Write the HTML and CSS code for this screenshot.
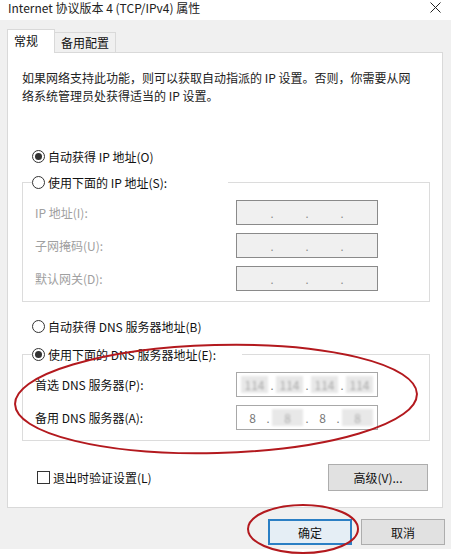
FILE: index.html
```html
<!DOCTYPE html>
<html lang="zh-CN">
<head>
  <meta charset="UTF-8">
  <title>Internet 协议版本 4 (TCP/IPv4) 属性</title>
  <link rel="stylesheet" href="styles.css">
</head>
<body>
  <div class="titlebar">
    <span class="title">Internet 协议版本 4 (TCP/IPv4) 属性</span>
    <svg class="close" width="11" height="11" viewBox="0 0 11 11"><path d="M0.5 0.5 L10.5 10.5 M10.5 0.5 L0.5 10.5" stroke="#222" stroke-width="1"/></svg>
  </div>

  <div class="dialog">
    <div class="tabs">
      <div class="tab active">常规</div>
      <div class="tab">备用配置</div>
    </div>

    <div class="panel">
      <p class="desc">如果网络支持此功能，则可以获取自动指派的 IP 设置。否则，你需要从网<br>络系统管理员处获得适当的 IP 设置。</p>

      <div class="option first"><span class="radio checked"></span>自动获得 IP 地址(O)</div>

      <fieldset class="group">
        <legend class="option"><span class="radio"></span>使用下面的 IP 地址(S):</legend>
        <div class="row disabled">
          <span class="label">IP 地址(I):</span>
          <div class="ipbox"><span></span><i>.</i><span></span><i>.</i><span></span><i>.</i><span></span></div>
        </div>
        <div class="row disabled">
          <span class="label">子网掩码(U):</span>
          <div class="ipbox"><span></span><i>.</i><span></span><i>.</i><span></span><i>.</i><span></span></div>
        </div>
        <div class="row disabled">
          <span class="label">默认网关(D):</span>
          <div class="ipbox"><span></span><i>.</i><span></span><i>.</i><span></span><i>.</i><span></span></div>
        </div>
      </fieldset>

      <div class="option dns-auto"><span class="radio"></span>自动获得 DNS 服务器地址(B)</div>

      <fieldset class="group dns">
        <legend class="option"><span class="radio checked"></span>使用下面的 DNS 服务器地址(E):</legend>
        <div class="row">
          <span class="label">首选 DNS 服务器(P):</span>
          <div class="ipbox filled"><span class="blur">114</span><i>.</i><span class="blur">114</span><i>.</i><span class="blur">114</span><i>.</i><span class="blur">114</span></div>
        </div>
        <div class="row">
          <span class="label">备用 DNS 服务器(A):</span>
          <div class="ipbox filled"><span>8</span><i>.</i><span class="blur">8</span><i>.</i><span>8</span><i>.</i><span class="blur">8</span></div>
        </div>
      </fieldset>

      <div class="footer">
        <label class="check"><span class="box"></span>退出时验证设置(L)</label>
        <button class="btn advanced">高级(V)...</button>
      </div>
    </div>

    <div class="actions">
      <button class="btn default">确定</button>
      <button class="btn">取消</button>
    </div>
  </div>

  <!-- red hand-drawn marks over the dialog -->
  <svg class="marks" width="451" height="555" viewBox="0 0 451 555">
    <ellipse cx="216" cy="399" rx="201" ry="54" transform="rotate(-1.5 216 399)" fill="none" stroke="#b3191e" stroke-width="2"/>
    <ellipse cx="303" cy="529" rx="55" ry="24" fill="none" stroke="#b3191e" stroke-width="2"/>
  </svg>
</body>
</html>
```

FILE: styles.css
```css
body {
  margin: 0;
  width: 451px;
  height: 555px;
  background: #ffffff;
  font-family: "Noto Sans CJK SC", "Liberation Sans", sans-serif;
  font-size: 12px;
  color: #111;
  position: relative;
  overflow: hidden;
}

.titlebar {
  height: 20px;
  display: flex;
  justify-content: space-between;
  align-items: flex-start;
  padding: 0 10px 0 8px;
  box-sizing: border-box;
  background: #fff;
}

.title {
  line-height: 16px;
  color: #222;
}

.close {
  margin-top: 2px;
}

.dialog {
  height: 529px;
  background: #f0f0f0;
  padding: 9px 8px 0 7px;
  box-sizing: border-box;
}

.tabs {
  display: flex;
  align-items: flex-end;
  height: 24px;
  margin-bottom: -1px;
  position: relative;
  z-index: 1;
}

.tab {
  height: 19px;
  line-height: 19px;
  padding: 0 6px;
  border: 1px solid #d9d9d9;
  border-bottom: none;
  border-left: none;
  background: #f0f0f0;
  margin-bottom: 1px;
}

.tab.active {
  height: 24px;
  line-height: 22px;
  width: 48px;
  box-sizing: border-box;
  border-left: 1px solid #d9d9d9;
  background: #fff;
  margin-bottom: 0;
}

.panel {
  background: #fff;
  border: 1px solid #d9d9d9;
  padding: 16px 12px 16px 14px;
}

.desc {
  margin: 0;
  line-height: 18px;
  color: #222;
}

.option {
  display: flex;
  align-items: center;
  height: 18px;
  padding-left: 10px;
  white-space: nowrap;
}

.option.first {
  margin-top: 42px;
}

.radio {
  width: 13px;
  height: 13px;
  border: 1px solid #333;
  border-radius: 50%;
  box-sizing: border-box;
  margin-right: 3px;
  display: flex;
  align-items: center;
  justify-content: center;
  flex: none;
}

.radio.checked::after {
  content: "";
  width: 7px;
  height: 7px;
  border-radius: 50%;
  background: #333;
}

.group {
  margin: 8px 0 0 0;
  padding: 0 0 10px 12px;
  border: 1px solid #dcdcdc;
  min-width: 0;
}

.group legend {
  margin-left: -3px;
  padding: 0;
  width: 196px;
  box-sizing: border-box;
  background: #fff;
}

.row {
  display: flex;
  align-items: center;
  height: 25px;
  margin-top: 8px;
}

.row:first-of-type {
  margin-top: 9px;
}

.label {
  width: 201px;
  flex: none;
}

.disabled .label {
  color: #a0a0a0;
}

.ipbox {
  width: 142px;
  height: 25px;
  box-sizing: border-box;
  border: 1px solid #8a8a8a;
  background: #f0f0f0;
  display: flex;
  align-items: center;
  color: #8a8a8a;
}

.ipbox span {
  flex: 1;
  text-align: center;
}

.ipbox i {
  font-style: normal;
  width: 0;
  display: flex;
  justify-content: center;
  font-size: 11px;
}

.ipbox.filled {
  background: #fff;
  border-color: #a8a8a8;
  color: #777;
}

.ipbox .blur {
  color: #aaa;
  background: #e8e8e8;
  filter: blur(1.2px);
  margin: 0 4px;
}

.dns-auto {
  margin-top: 15px;
}

.group.dns {
  margin-top: 10px;
}

.group.dns legend {
  width: 210px;
}

.footer {
  display: flex;
  justify-content: space-between;
  align-items: center;
  height: 27px;
  margin-top: 23px;
}

.check {
  display: flex;
  align-items: center;
  padding-left: 15px;
}

.box {
  width: 13px;
  height: 13px;
  border: 1px solid #333;
  box-sizing: border-box;
  margin-right: 3px;
}

.btn {
  font-family: inherit;
  font-size: 12px;
  color: #111;
  background: #e1e1e1;
  border: 1px solid #adadad;
  padding: 0;
  box-sizing: border-box;
}

.advanced {
  width: 100px;
  height: 27px;
  margin-right: 2px;
}

.actions {
  display: flex;
  justify-content: flex-end;
  gap: 9px;
  margin-top: 11px;
  margin-right: -2px;
}

.actions .btn {
  width: 84px;
  height: 26px;
}

.btn.default {
  border: 2px solid #2b7fc4;
  background: #e5eef5;
}

.marks {
  position: absolute;
  top: 0;
  left: 0;
  pointer-events: none;
}
```
